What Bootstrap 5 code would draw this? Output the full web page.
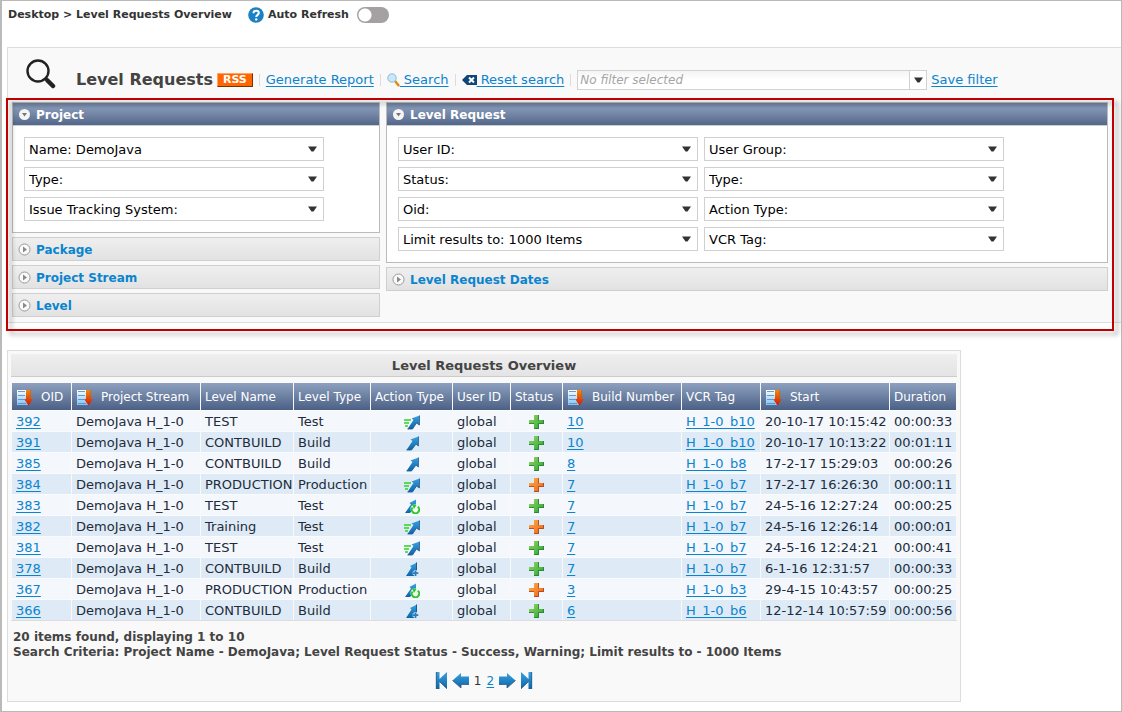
<!DOCTYPE html>
<html lang="en">
<head>
<meta charset="utf-8">
<meta name="viewport" content="width=device-width, initial-scale=1">
<title>Level Requests Overview</title>
<link href="https://cdn.jsdelivr.net/npm/bootstrap@5.3.0/dist/css/bootstrap.min.css" rel="stylesheet">
<style>
  body { font-family: "DejaVu Sans", sans-serif; font-size: 13px; line-height: 16px; color: #333; background: #fff; }
  a { color: #0a84cf; text-underline-offset: 2px; }
  .page-frame { min-height: 100vh; border: 1px solid #bababa; border-left-width: 2px; padding: 0 0 9px 5px; }
  .crumbs { font-size: 11px; font-weight: 700; height: 28px; padding-left: 1px; }
  .crumbs .form-check-input { width: 32px; height: 16px; margin: 0; border: 0; background-color: #a5a1a2;
    background-image: radial-gradient(circle at 8px 8px, #fff 6px, transparent 7px); background-position: 0 0; background-size: 100% 100%; }
  .search-area { margin-top: 18px; border: 1px solid #ddd; border-right: 0; background: #f9f9f9; padding: 11px 13px 5px 4px; }
  .tool-row { height: 43px; padding-left: 14px; }
  .tool-row h1 { font-size: 16px; font-weight: 700; line-height: 26px; color: #444; }
  .tool-row .links { height: 26px; }
  .tool-row .links svg { align-self: center; }
  .rss { background: #f60; color: #fff; border: 1px solid #ffa366; border-right-color: #73350a; border-bottom-color: #73350a; font-size: 11px; font-weight: 700; line-height: 12px; padding: 0 5px; text-decoration: none; }
  .rss:hover { color: #fff; }
  .bar { width: 1px; height: 12px; margin: 0 6px; background: #ddd; }
  .filter-box { width: 350px; }
  .filter-box input, .filter-box button { height: 20px; min-height: 0; border: 1px solid #d2d2d2; border-radius: 0; font-size: 12px; line-height: 16px; background: #fff; }
  .filter-box input { padding: 0 2px; font-style: italic; background: linear-gradient(#f4f4f4, #fff 50%); }
  .filter-box input::placeholder { color: #a5a5a5; }
  .filter-box button { width: 18px; padding: 0; }
  .filters { position: relative; gap: 6px; }
  .callout-frame { position: absolute; inset: -4px -6px -14px -6px; border: 2px solid #c00000; pointer-events: none; filter: drop-shadow(4px 4px 2px rgba(0,0,0,.3)); }
  .col-project { flex: 0 0 368px; }
  .group { border: 1px solid #bbb; background: #fff; }
  .group-head { border: 0; width: 100%; height: 23px; padding: 1px 5px 0; gap: 5px; border-bottom: 1px solid #c9cfd8; color: #fff; font-size: 12px; font-weight: 700; background: linear-gradient(#6e819f, #8194b3 25%, #7284a5 55%, #526688); }
  .group-body { padding: 11px; gap: 6px; }
  .shut { height: 24px; border: 1px solid #cfcfcf; padding: 1px 5px 0; gap: 5px; color: #0a84cf; font-size: 12px; font-weight: 700; background: linear-gradient(#efefef, #e2e2e2); }
  .pick.form-select { width: 300px; height: 24px; padding: 1px 24px 0 4px; border: 1px solid #d0d0d0; border-radius: 0; font-size: 13px; line-height: 20px; color: #000; background-size: 9px 6px; background-position: right 6px center;
    background-image: url("data:image/svg+xml,%3Csvg xmlns='http://www.w3.org/2000/svg' viewBox='0 0 9 6'%3E%3Cpath d='M0 .5h9L5.5 5.5h-2z' fill='%23333'/%3E%3C/svg%3E"); }
  .results { width: fit-content; margin-top: 27px; border: 1px solid #ddd; background: #f9f9f9; padding: 3px 3px 12px; }
  .results h2 { margin: 0 0 6px; height: 23px; border-bottom: 1px solid #ccc; background: linear-gradient(#efefef, #e4e4e4); font-size: 13px; font-weight: 700; line-height: 23px; color: #444; text-align: center; }
  .grid-table { border-collapse: separate; border-spacing: 1px 0; table-layout: fixed; width: 946px; border-bottom: 1px solid #ddd; }
  .grid-table th { height: 27px; padding: 1px 0 0 4px; font-size: 12px; font-weight: 400; color: #fff; white-space: nowrap; vertical-align: middle; background: linear-gradient(#8da0bf, #4b6085); }
  .grid-table td { height: 21px; padding: 2px 0 0 4px; font-size: 13px; line-height: 18px; color: #222b3a; white-space: nowrap; background: #f4f7fc; border-top: 1px solid #fafbfd; }
  .grid-table tr:nth-child(even) td { background: #deebf6; }
  .grid-table td.ic { padding: 1px 0 0; text-align: center; }
  .grid-table td.ic svg { display: block; margin: 0 auto; }
  .sorter { display: flex; align-items: center; gap: 8px; color: inherit; text-decoration: none; }
  .w1{width:59px}.w2{width:128px}.w3{width:92px}.w4{width:76px}.w5{width:81px}.w6{width:57px}.w7{width:51px}.w8{width:118px}.w9{width:78px}.w10{width:128px}.w11{width:66px}
  .summary { font-size: 12px; font-weight: 700; line-height: 15px; color: #444; margin: 9px 0 0 2px; }
  .pager { font-size: 12px; margin-top: 12px; gap: 5px; }
  .pager a { display: flex; }
</style>
</head>
<body>
<svg class="position-absolute" width="0" height="0" aria-hidden="true">
  <defs>
    <linearGradient id="gBlue" x1="0" y1="0" x2="0" y2="1"><stop offset="0" stop-color="#3aa0e0"/><stop offset="1" stop-color="#0b66a9"/></linearGradient>
    <linearGradient id="gGreen" x1="0" y1="0" x2="1" y2="1"><stop offset="0" stop-color="#9bd45c"/><stop offset="1" stop-color="#1ea53c"/></linearGradient>
    <linearGradient id="gOrange" x1="0" y1="0" x2="1" y2="1"><stop offset="0" stop-color="#fdb13d"/><stop offset="1" stop-color="#f05a22"/></linearGradient>
    <linearGradient id="gRed" x1="0" y1="0" x2="0" y2="1"><stop offset="0" stop-color="#f08a10"/><stop offset="1" stop-color="#d01808"/></linearGradient>
    <linearGradient id="gDoc" x1="0" y1="0" x2="0" y2="1"><stop offset="0" stop-color="#fff"/><stop offset="1" stop-color="#7cc4f5"/></linearGradient>
  </defs>
  <symbol id="sort" viewBox="0 0 17 17"><path d="M1 1h11v15H1z" fill="url(#gDoc)"/><path d="M2 2.500h7M2 6.500h7M2 10.500h6M2 14.500h8" stroke="#5f8fc4" stroke-width=".9"/><path d="M10 1h5v9h2l-4.500 6.500L8 10h2z" fill="url(#gRed)"/><path d="M14.500 1v9" stroke="#c9600a" stroke-width=".6"/></symbol>
  <symbol id="arrow" viewBox="0 0 16 16"><path d="M14.500 1.500L6.500 4.500l2 1.500L2.500 15h5L12 9l2 2z" fill="url(#gBlue)"/><path d="M14.500 1.500V11L12 9l-4.500 6h-5" fill="none" stroke="#23568c" stroke-width=".8"/></symbol>
  <symbol id="fast" viewBox="0 0 16 16"><path d="M15.500 1.500l-8 3 2 1.500-6 9h5l4-6 2.500 2z" fill="url(#gBlue)"/><path d="M15.500 1.500v9.500l-3-2-4 6h-5" fill="none" stroke="#23568c" stroke-width=".8"/><path d="M0 6h7M0 9h5M1 12h3" stroke="#2fd51f" stroke-width="1.600"/></symbol>
  <symbol id="cycle" viewBox="0 0 16 16"><path d="M12 1.500L5.500 5l1.500 1.500L1 15h5l6-7z" fill="url(#gBlue)"/><circle cx="11" cy="11" r="4.500" fill="#f4fff0"/><path d="M13.800 8.800a3.700 3.700 0 1 1-5.300 .7" fill="none" stroke="#2dc82b" stroke-width="2"/><path d="M8 6.500l4.500 .5-2.500 4z" fill="#2dc82b"/></symbol>
  <symbol id="plusarrow" viewBox="0 0 16 16"><path d="M13 1.500L6 5l1.500 1.500L2 15h8l3-4z" fill="url(#gBlue)"/><path d="M12.500 1.500V9" stroke="#23568c"/><path d="M11.500 9.300v5.700M8.700 12.200h5.600" stroke="#deebf6" stroke-width="3.200"/><path d="M11.500 9.500v5.500M8.800 12.200h5.500" stroke="#2c7cbc" stroke-width="1.800"/></symbol>
  <symbol id="ok" viewBox="0 0 16 16"><path d="M5 1h5v5h5v4h-5v5H5v-5H0V6h5z" fill="url(#gGreen)"/><path d="M9.500 1v5.500M14.500 6v3.500h-5v5H5M0 9.500h5" fill="none" stroke="#2d7a2d" stroke-width=".8"/></symbol>
  <symbol id="warn" viewBox="0 0 16 16"><path d="M5 1h5v5h5v4h-5v5H5v-5H0V6h5z" fill="url(#gOrange)"/><path d="M9.500 1v5.500M14.500 6v3.500h-5v5H5M0 9.500h5" fill="none" stroke="#a0451c" stroke-width=".8"/></symbol>
  <symbol id="opened" viewBox="0 0 13 13"><circle cx="6.500" cy="6.500" r="5.500" fill="#f5f5f5"/><path d="M4 5h5L6.500 8.500z" fill="#777"/></symbol>
  <symbol id="closed" viewBox="0 0 13 13"><circle cx="6.500" cy="6.500" r="5.500" fill="#fafafa" stroke="#999"/><path d="M5 3.500l4 3-4 3z" fill="#8a8a8a"/></symbol>
  <symbol id="caret" viewBox="0 0 9 6"><path d="M0 .5h9L5.500 5.500h-2z" fill="#333"/></symbol>
  <symbol id="next" viewBox="0 0 17 17"><path d="M0 4.500h8V1l8.500 7.500L8 16v-3.500H0z" fill="url(#gBlue)"/><path d="M0 12.500h8V16l8.500-7.500" fill="none" stroke="#31597f" stroke-width=".8"/></symbol>
  <symbol id="last" viewBox="0 0 12 17"><path d="M0 0l7.500 7V0H11v17H7.500v-7L0 17z" fill="url(#gBlue)"/><path d="M10.700 0v17M0 16.500l7.500-7" fill="none" stroke="#31597f" stroke-width=".8"/></symbol>
</svg>

<div class="page-frame">
  <header class="crumbs d-flex align-items-center">
    <span>Desktop &gt; Level Requests Overview</span>
    <a href="#" class="d-flex ms-3 me-1" aria-label="Help"><svg width="16" height="16" viewBox="0 0 16 16"><circle cx="8" cy="8" r="7.800" fill="#1b80c4"/><path d="M5.500 6.200C5.500 3 10.800 3.200 10.800 6c0 1.900-2.600 1.900-2.600 4" fill="none" stroke="#fff" stroke-width="2"/><circle cx="8.200" cy="12.400" r="1.200" fill="#fff"/></svg></a>
    <label for="auto">Auto Refresh</label>
    <div class="form-switch p-0 ms-2 d-flex"><input class="form-check-input" type="checkbox" role="switch" id="auto"></div>
  </header>

  <section class="search-area">
    <div class="tool-row d-flex align-items-start">
      <svg class="flex-shrink-0" width="30" height="30" viewBox="0 0 30 30"><circle cx="12" cy="12" r="10.500" fill="none" stroke="#222" stroke-width="2.400"/><path d="M19.500 19.500l2 2" stroke="#222" stroke-width="2.500"/><path d="M21.500 21.500l5.500 5.500" stroke="#222" stroke-width="4.500" stroke-linecap="round"/></svg>
      <h1 class="mb-0 ms-3 mt-2 ps-1">Level Requests</h1>
      <div class="links d-flex align-items-center mt-2 ms-1">
        <a href="#" class="rss">RSS</a><span class="bar"></span>
        <a href="#">Generate Report</a><span class="bar"></span>
        <a href="#" class="d-flex"><svg width="13" height="14" viewBox="0 0 13 14"><path d="M8 8l4 5" stroke="#e8850c" stroke-width="2.400"/><circle cx="5" cy="5" r="4.200" fill="#c9e9fb" stroke="#8fb9d6"/></svg>&nbsp;Search</a><span class="bar"></span>
        <a href="#" class="d-flex"><svg width="15" height="12" viewBox="0 0 15 12"><path d="M5 1h10v10H5L0 6z" fill="#0c4577"/><path d="M7 3.500l5 5M12 3.500l-5 5" stroke="#fff" stroke-width="2"/></svg>&nbsp;Reset search</a><span class="bar"></span>
        <div class="filter-box input-group flex-nowrap">
          <input type="text" class="form-control" placeholder="No filter selected" aria-label="Filter">
          <button type="button" class="d-flex align-items-center justify-content-center" aria-label="Choose filter"><svg width="9" height="6"><use href="#caret"/></svg></button>
        </div>
        <a href="#" class="ms-1">Save filter</a>
      </div>
    </div>

    <div class="filters d-flex align-items-start">
      <div class="col-project d-grid gap-1">
        <div class="group">
          <button type="button" class="group-head d-flex align-items-center"><svg width="13" height="13"><use href="#opened"/></svg>Project</button>
          <div class="group-body d-flex flex-column">
            <select class="form-select pick" aria-label="Name"><option>Name: DemoJava</option></select>
            <select class="form-select pick" aria-label="Type"><option>Type:</option></select>
            <select class="form-select pick" aria-label="Issue Tracking System"><option>Issue Tracking System:</option></select>
          </div>
        </div>
        <button type="button" class="shut d-flex align-items-center"><svg width="13" height="13"><use href="#closed"/></svg>Package</button>
        <button type="button" class="shut d-flex align-items-center"><svg width="13" height="13"><use href="#closed"/></svg>Project Stream</button>
        <button type="button" class="shut d-flex align-items-center"><svg width="13" height="13"><use href="#closed"/></svg>Level</button>
      </div>
      <div class="flex-grow-1 d-grid gap-1">
        <div class="group">
          <button type="button" class="group-head d-flex align-items-center"><svg width="13" height="13"><use href="#opened"/></svg>Level Request</button>
          <div class="group-body d-flex">
            <div class="group-body p-0 d-flex flex-column">
              <select class="form-select pick" aria-label="User ID"><option>User ID:</option></select>
              <select class="form-select pick" aria-label="Status"><option>Status:</option></select>
              <select class="form-select pick" aria-label="Oid"><option>Oid:</option></select>
              <select class="form-select pick" aria-label="Limit results to"><option>Limit results to: 1000 Items</option></select>
            </div>
            <div class="group-body p-0 d-flex flex-column">
              <select class="form-select pick" aria-label="User Group"><option>User Group:</option></select>
              <select class="form-select pick" aria-label="Request type"><option>Type:</option></select>
              <select class="form-select pick" aria-label="Action Type"><option>Action Type:</option></select>
              <select class="form-select pick" aria-label="VCR Tag"><option>VCR Tag:</option></select>
            </div>
          </div>
        </div>
        <button type="button" class="shut d-flex align-items-center"><svg width="13" height="13"><use href="#closed"/></svg>Level Request Dates</button>
      </div>
      <div class="callout-frame"></div>
    </div>
  </section>

  <section class="results">
    <h2>Level Requests Overview</h2>
    <table class="grid-table">
      <colgroup><col class="w1"><col class="w2"><col class="w3"><col class="w4"><col class="w5"><col class="w6"><col class="w7"><col class="w8"><col class="w9"><col class="w10"><col class="w11"></colgroup>
      <thead><tr>
        <th><a href="#" class="sorter"><svg width="17" height="17"><use href="#sort"/></svg>OID</a></th>
        <th><a href="#" class="sorter"><svg width="17" height="17"><use href="#sort"/></svg>Project Stream</a></th>
        <th>Level Name</th><th>Level Type</th><th>Action Type</th><th>User ID</th><th>Status</th>
        <th><a href="#" class="sorter"><svg width="17" height="17"><use href="#sort"/></svg>Build Number</a></th>
        <th>VCR Tag</th>
        <th><a href="#" class="sorter"><svg width="17" height="17"><use href="#sort"/></svg>Start</a></th>
        <th>Duration</th>
      </tr></thead>
      <tbody>
        <tr><td><a href="#">392</a></td><td>DemoJava H_1-0</td><td>TEST</td><td>Test</td><td class="ic"><svg width="16" height="16"><use href="#fast"/></svg></td><td>global</td><td class="ic"><svg width="16" height="16"><use href="#ok"/></svg></td><td><a href="#">10</a></td><td><a href="#">H_1-0_b10</a></td><td>20-10-17 10:15:42</td><td>00:00:33</td></tr>
        <tr><td><a href="#">391</a></td><td>DemoJava H_1-0</td><td>CONTBUILD</td><td>Build</td><td class="ic"><svg width="16" height="16"><use href="#arrow"/></svg></td><td>global</td><td class="ic"><svg width="16" height="16"><use href="#ok"/></svg></td><td><a href="#">10</a></td><td><a href="#">H_1-0_b10</a></td><td>20-10-17 10:13:22</td><td>00:01:11</td></tr>
        <tr><td><a href="#">385</a></td><td>DemoJava H_1-0</td><td>CONTBUILD</td><td>Build</td><td class="ic"><svg width="16" height="16"><use href="#arrow"/></svg></td><td>global</td><td class="ic"><svg width="16" height="16"><use href="#ok"/></svg></td><td><a href="#">8</a></td><td><a href="#">H_1-0_b8</a></td><td>17-2-17 15:29:03</td><td>00:00:26</td></tr>
        <tr><td><a href="#">384</a></td><td>DemoJava H_1-0</td><td>PRODUCTION</td><td>Production</td><td class="ic"><svg width="16" height="16"><use href="#fast"/></svg></td><td>global</td><td class="ic"><svg width="16" height="16"><use href="#warn"/></svg></td><td><a href="#">7</a></td><td><a href="#">H_1-0_b7</a></td><td>17-2-17 16:26:30</td><td>00:00:11</td></tr>
        <tr><td><a href="#">383</a></td><td>DemoJava H_1-0</td><td>TEST</td><td>Test</td><td class="ic"><svg width="16" height="16"><use href="#cycle"/></svg></td><td>global</td><td class="ic"><svg width="16" height="16"><use href="#ok"/></svg></td><td><a href="#">7</a></td><td><a href="#">H_1-0_b7</a></td><td>24-5-16 12:27:24</td><td>00:00:25</td></tr>
        <tr><td><a href="#">382</a></td><td>DemoJava H_1-0</td><td>Training</td><td>Test</td><td class="ic"><svg width="16" height="16"><use href="#fast"/></svg></td><td>global</td><td class="ic"><svg width="16" height="16"><use href="#warn"/></svg></td><td><a href="#">7</a></td><td><a href="#">H_1-0_b7</a></td><td>24-5-16 12:26:14</td><td>00:00:01</td></tr>
        <tr><td><a href="#">381</a></td><td>DemoJava H_1-0</td><td>TEST</td><td>Test</td><td class="ic"><svg width="16" height="16"><use href="#fast"/></svg></td><td>global</td><td class="ic"><svg width="16" height="16"><use href="#ok"/></svg></td><td><a href="#">7</a></td><td><a href="#">H_1-0_b7</a></td><td>24-5-16 12:24:21</td><td>00:00:41</td></tr>
        <tr><td><a href="#">378</a></td><td>DemoJava H_1-0</td><td>CONTBUILD</td><td>Build</td><td class="ic"><svg width="16" height="16"><use href="#plusarrow"/></svg></td><td>global</td><td class="ic"><svg width="16" height="16"><use href="#ok"/></svg></td><td><a href="#">7</a></td><td><a href="#">H_1-0_b7</a></td><td>6-1-16 12:31:57</td><td>00:00:33</td></tr>
        <tr><td><a href="#">367</a></td><td>DemoJava H_1-0</td><td>PRODUCTION</td><td>Production</td><td class="ic"><svg width="16" height="16"><use href="#cycle"/></svg></td><td>global</td><td class="ic"><svg width="16" height="16"><use href="#warn"/></svg></td><td><a href="#">3</a></td><td><a href="#">H_1-0_b3</a></td><td>29-4-15 10:43:57</td><td>00:00:25</td></tr>
        <tr><td><a href="#">366</a></td><td>DemoJava H_1-0</td><td>CONTBUILD</td><td>Build</td><td class="ic"><svg width="16" height="16"><use href="#plusarrow"/></svg></td><td>global</td><td class="ic"><svg width="16" height="16"><use href="#ok"/></svg></td><td><a href="#">6</a></td><td><a href="#">H_1-0_b6</a></td><td>12-12-14 10:57:59</td><td>00:00:56</td></tr>
      </tbody>
    </table>
    <div class="summary">20 items found, displaying 1 to 10<br>Search Criteria: Project Name - DemoJava; Level Request Status - Success, Warning; Limit results to - 1000 Items</div>
    <nav class="pager d-flex justify-content-center align-items-center" aria-label="Pages">
      <a href="#" aria-label="First"><svg width="12" height="17"><use href="#last" transform="matrix(-1 0 0 1 12 0)"/></svg></a>
      <a href="#" aria-label="Previous"><svg width="17" height="17"><use href="#next" transform="matrix(-1 0 0 1 17 0)"/></svg></a>
      <span>1</span><a href="#">2</a>
      <a href="#" aria-label="Next"><svg width="17" height="17"><use href="#next"/></svg></a>
      <a href="#" aria-label="Last"><svg width="12" height="17"><use href="#last"/></svg></a>
    </nav>
  </section>
</div>
<script src="https://cdn.jsdelivr.net/npm/bootstrap@5.3.0/dist/js/bootstrap.bundle.min.js"></script>
</body>
</html>
